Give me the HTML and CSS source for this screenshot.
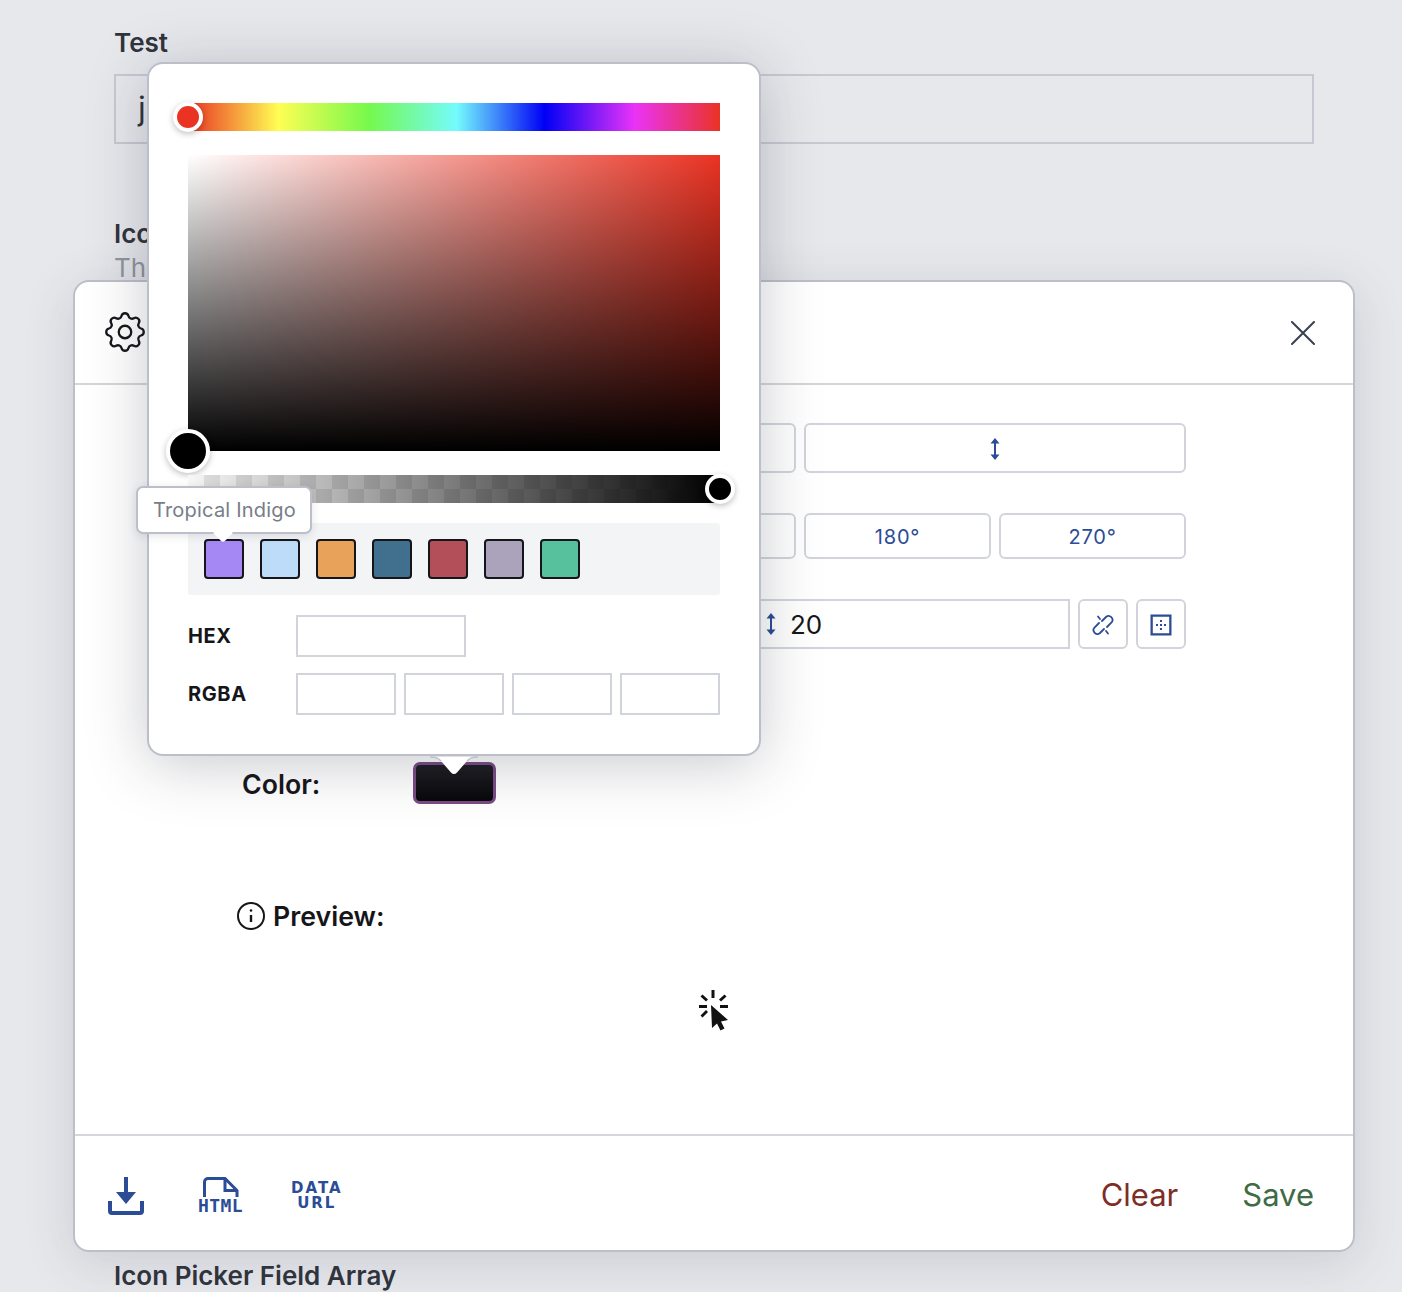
FILE: index.html
```html
<!DOCTYPE html>
<html lang="en">
<head>
    <meta charset="UTF-8">
    <meta name="viewport" content="width=device-width, initial-scale=1.0">
    <title>Icon Picker</title>
    <link rel="stylesheet" href="styles.css">
</head>
<body>
    <div class="page">
        <label class="field-label">Test</label>
        <div class="text-input">j</div>
        <label class="field-label icon-label">Icon</label>
        <p class="field-help">This</p>
        <label class="field-label array-label">Icon Picker Field Array</label>
    </div>

    <div class="modal">
        <header class="modal-head">
            <svg class="gear" viewBox="0 0 24 24" fill="none" stroke="#16161a" stroke-width="1.100" stroke-linecap="round" stroke-linejoin="round">
                <path d="M10.325 4.317c.426-1.756 2.924-1.756 3.35 0a1.724 1.724 0 0 0 2.573 1.066c1.543-.94 3.31.826 2.37 2.37a1.724 1.724 0 0 0 1.065 2.572c1.756.426 1.756 2.924 0 3.35a1.724 1.724 0 0 0-1.066 2.573c.94 1.543-.826 3.31-2.37 2.37a1.724 1.724 0 0 0-2.572 1.065c-.426 1.756-2.924 1.756-3.35 0a1.724 1.724 0 0 0-2.573-1.066c-1.543.94-3.31-.826-2.37-2.37a1.724 1.724 0 0 0-1.065-2.572c-1.756-.426-1.756-2.924 0-3.35a1.724 1.724 0 0 0 1.066-2.573c-.94-1.543.826-3.31 2.37-2.37 1 .608 2.296.07 2.572-1.065z"/>
                <circle cx="12" cy="12" r="3"/>
            </svg>
            <svg class="close" viewBox="0 0 24 24" fill="none" stroke="#374151" stroke-width="2" stroke-linecap="round">
                <path d="M1 1l22 22M23 1L1 23"/>
            </svg>
        </header>

        <div class="modal-body">
            <div class="row flip-row">
                <button class="opt"></button>
                <button class="opt">
                    <svg class="updown" viewBox="0 0 12 24" fill="#2b4c96"><path d="M5 4h2v16H5z"/><path d="M6 1l4.500 5.500h-9zM6 23l-4.500-5.500h9z"/></svg>
                </button>
            </div>
            <div class="row rotate-row">
                <button class="opt"></button>
                <button class="opt"></button>
                <button class="opt">180°</button>
                <button class="opt">270°</button>
            </div>
            <div class="row size-row">
                <div class="size-input"></div>
                <div class="size-input">
                    <svg class="updown small" viewBox="0 0 12 24" fill="#2b4c96"><path d="M5 4h2v16H5z"/><path d="M6 1l4.500 5.500h-9zM6 23l-4.500-5.500h9z"/></svg>
                    <span>20</span>
                </div>
                <button class="square">
                    <svg viewBox="0 0 24 24" fill="none" stroke="#2b4c96" stroke-width="1.800" stroke-linecap="round">
                        <path d="M11 8l4-4a3.900 3.900 0 0 1 5.500 5.500L16 14"/>
                        <path d="M13 16l-4 4a3.900 3.900 0 0 1-5.500-5.500L8 10"/>
                        <path d="M7 3.500L9 6M17 20.500L15 18"/>
                    </svg>
                </button>
                <button class="square">
                    <svg viewBox="0 0 24 24" fill="#2b4c96">
                        <path d="M1.500 1.500h21v21h-21zM3.800 3.800v16.400h16.400V3.800z" fill-rule="evenodd"/>
                        <path d="M11 7h2v2h-2zM11 11h2v2h-2zM7 11h2v2H7zM15 11h2v2h-2zM11 15h2v2h-2z"/>
                    </svg>
                </button>
            </div>

            <div class="color-row">
                <span class="row-label">Color:</span>
                <span class="color-swatch"></span>
            </div>

            <div class="preview-row">
                <svg class="info" viewBox="0 0 28 28" fill="none" stroke="#16161a" stroke-width="2">
                    <circle cx="14" cy="14" r="13"/>
                    <path d="M14 13v7" stroke-width="2.400"/>
                    <circle cx="14" cy="8.500" r="1.300" fill="#16161a" stroke="none"/>
                </svg>
                <span class="row-label">Preview:</span>
            </div>

            <div class="preview-icon">
                <svg viewBox="0 0 32 42" fill="#111">
                    <path d="M14.500 0h3v8h-3z"/>
                    <path d="M2 15h8v3H2zM23 15h8v3h-8z"/>
                    <path d="M5.500 4.500l5.500 5-2 2-5.500-5zM27.500 4.500l-5.500 5 2 2 5.500-5zM9 20l2 2-5.500 5.500-2-2z"/>
                    <path d="M14 15l17 15-7 1.500 3.500 7-4 2-3.500-7L15 38z"/>
                </svg>
            </div>
        </div>

        <footer class="modal-foot">
            <div class="export-icons">
                <svg class="download" viewBox="0 0 36 38" fill="#2b4c96">
                    <path d="M16 0h4v16h-4z"/>
                    <path d="M8 15h20L18 27z"/>
                    <path d="M0 24h4v10h28V24h4v10a4 4 0 0 1-4 4H4a4 4 0 0 1-4-4z"/>
                </svg>
                <div class="file-html">
                    <svg viewBox="0 0 36 20" fill="none" stroke="#2b4c96" stroke-width="3">
                        <path d="M1.500 20V5a3.500 3.500 0 0 1 3.500-3.500h17l12 12V20"/>
                        <path d="M22 1.500v12h12"/>
                    </svg>
                    <span>HTML</span>
                </div>
                <div class="data-url">DATA<br>URL</div>
            </div>
            <div class="foot-actions">
                <button class="clear">Clear</button>
                <button class="save">Save</button>
            </div>
        </footer>
    </div>

    <div class="picker">
        <div class="hue-bar"><span class="knob hue-knob"></span></div>
        <div class="sv-box"><span class="knob sv-knob"></span></div>
        <div class="alpha-bar"><span class="knob alpha-knob"></span></div>

        <div class="swatches">
            <span class="swatch indigo"></span>
            <span class="swatch sky"></span>
            <span class="swatch sand"></span>
            <span class="swatch steel"></span>
            <span class="swatch rose"></span>
            <span class="swatch lilac"></span>
            <span class="swatch mint"></span>
            <div class="tooltip">Tropical Indigo</div>
        </div>

        <div class="value-row hex-row">
            <span class="value-label">HEX</span>
            <span class="value-box hex-box"></span>
        </div>
        <div class="value-row">
            <span class="value-label">RGBA</span>
            <span class="value-box"></span>
            <span class="value-box"></span>
            <span class="value-box"></span>
            <span class="value-box"></span>
        </div>

        <svg class="picker-arrow" viewBox="0 0 48 20">
            <path d="M0 1C6 1 8 2 11 5L21 16.500Q24 19.500 27 16.500L37 5C40 2 42 1 48 1Z" fill="#fff"/>
            <path d="M0 1C6 1 8 2 11 5M37 5C40 2 42 1 48 1" fill="none" stroke="#bcbfc9" stroke-width="1.500"/>
        </svg>
    </div>
</body>
</html>
```

FILE: styles.css
```css
* {
    box-sizing: border-box;
}

body {
    margin: 0;
    height: 1292px;
    overflow: hidden;
    position: relative;
    background-color: #e7e8ec;
    color: #16161a;
    font-family: Inter, "Liberation Sans", sans-serif;
}

button {
    font-family: inherit;
    background: #fff;
    padding: 0;
    cursor: pointer;
}

.page {
    padding: 27px 88px 0 114px;
}

.field-label {
    display: block;
    font-size: 26px;
    line-height: 32px;
    font-weight: 600;
    color: #30343c;
}

.text-input {
    height: 70px;
    margin-top: 15px;
    padding-left: 22px;
    border: 2px solid #c6c9d1;
    font-size: 32px;
    line-height: 66px;
    color: #30343c;
}

.icon-label {
    margin-top: 74px;
}

.field-help {
    margin: 2px 0 0;
    font-size: 26px;
    line-height: 32px;
    color: #9297a1;
}

.array-label {
    margin-top: 976px;
}

/* modal */
.modal {
    position: absolute;
    left: 73px;
    top: 280px;
    width: 1282px;
    height: 972px;
    display: flex;
    flex-direction: column;
    background: #fff;
    border: 2px solid #bcbfc9;
    border-radius: 16px;
    box-shadow: 0 10px 50px rgba(60, 65, 80, 0.16);
}

.modal-head {
    height: 103px;
    flex: none;
    display: flex;
    align-items: center;
    justify-content: space-between;
    padding: 0 38px 0 25px;
    border-bottom: 2px solid #d4d6db;
}

.gear {
    width: 50px;
    height: 50px;
    margin-top: -2px;
}

.close {
    width: 24px;
    height: 24px;
}

.modal-body {
    flex: 1;
    padding: 38px 0 0 167px;
}

.row {
    display: flex;
    gap: 8px;
    width: 772px;
    margin-left: 172px;
}

.opt {
    flex: 1;
    display: flex;
    align-items: center;
    justify-content: center;
    padding-top: 1px;
    border: 2px solid #d1d5db;
    border-radius: 6px;
    font-size: 20px;
    letter-spacing: 0.8px;
    color: #2b4c96;
}

.flip-row {
    height: 50px;
}

.rotate-row {
    height: 46px;
    margin-top: 40px;
}

.size-row {
    height: 50px;
    margin-top: 40px;
}

.updown {
    width: 12px;
    height: 24px;
}

.size-input {
    flex: 1;
    display: flex;
    align-items: center;
    gap: 13px;
    padding-left: 9px;
    border: 2px solid #d1d5db;
    font-size: 26px;
    color: #16161a;
}

.size-input:first-child {
    flex: none;
    width: 332px;
}

.square {
    flex: none;
    width: 50px;
    display: flex;
    align-items: center;
    justify-content: center;
    padding-top: 2px;
    border: 2px solid #d1d5db;
    border-radius: 6px;
}

.square svg {
    width: 24px;
    height: 24px;
}

.row-label {
    font-size: 26.700px;
    line-height: 32px;
    font-weight: 600;
    color: #16161a;
}

.color-row {
    display: flex;
    align-items: center;
    height: 42px;
    margin-top: 113px;
}

.color-row .row-label {
    width: 171px;
    padding-top: 1px;
}

.color-swatch {
    width: 83px;
    height: 42px;
    border: 3px solid #7a4a86;
    border-radius: 7px;
    background: linear-gradient(#1d1d22, #08080a);
}

.preview-row {
    display: flex;
    align-items: center;
    gap: 8px;
    margin: 96px 0 0 -5px;
}

.info {
    width: 28px;
    height: 28px;
}

.preview-icon {
    display: flex;
    justify-content: center;
    margin: 58px 0 0 -170px;
}

.preview-icon svg {
    width: 32px;
    height: 42px;
}

.modal-foot {
    height: 116px;
    flex: none;
    display: flex;
    align-items: center;
    justify-content: space-between;
    padding: 6px 39px 0 33px;
    border-top: 2px solid #d4d6db;
}

.export-icons {
    display: flex;
    align-items: center;
    gap: 54px;
}

.download {
    width: 36px;
    height: 38px;
}

.file-html {
    width: 45px;
    display: flex;
    flex-direction: column;
    align-items: center;
}

.file-html svg {
    width: 36px;
    height: 20px;
}

.file-html span {
    font-family: "DejaVu Sans Mono", monospace;
    font-weight: 700;
    font-size: 18px;
    line-height: 18px;
    letter-spacing: 0.4px;
    color: #2b4c96;
}

.data-url {
    margin-left: -6px;
    font-family: "DejaVu Sans", sans-serif;
    font-weight: 700;
    font-size: 15px;
    line-height: 15px;
    letter-spacing: 2px;
    text-align: center;
    color: #2b4c96;
}

.foot-actions {
    display: flex;
    gap: 64px;
    margin-top: -2px;
}

.foot-actions button {
    border: none;
    font-size: 31px;
    line-height: 40px;
}

.clear {
    color: #7d2e26;
}

.save {
    color: #3f6b45;
}

/* colour picker popover */
.picker {
    position: absolute;
    left: 147px;
    top: 62px;
    width: 614px;
    height: 694px;
    padding: 39px 39px 0 40px;
    background: #fff;
    border: 2px solid #bcbfc9;
    border-radius: 16px;
    box-shadow: 0 8px 60px rgba(40, 44, 60, 0.25);
}

.hue-bar {
    position: relative;
    height: 28px;
    margin-left: -1px;
    background: linear-gradient(to right, #ea3323 0%, #fffe54 17%, #75f94c 34%, #74fbfd 50.500%, #0000f5 67%, #ea33f7 84%, #ea3323 100%);
}

.sv-box {
    position: relative;
    height: 296px;
    margin: 24px 0 0 -1px;
    background: linear-gradient(to top, #000, transparent), linear-gradient(to right, #fff, #ea3323);
}

.alpha-bar {
    position: relative;
    height: 28px;
    margin: 24px 0 0 -1px;
    background:
        linear-gradient(to right, transparent, #000),
        repeating-conic-gradient(#e2e2e2 0% 25%, #f7f7f7 0% 50%) 0 0 / 32px 28px;
}

.knob {
    position: absolute;
    width: 30px;
    height: 30px;
    border-radius: 50%;
    border: 4px solid #fff;
    box-shadow: 0 2px 6px rgba(0, 0, 0, 0.25);
}

.hue-knob {
    left: -15px;
    top: -1px;
    background: #ea3323;
}

.sv-knob {
    left: -22px;
    bottom: -22px;
    width: 44px;
    height: 44px;
    background: #000;
}

.alpha-knob {
    right: -15px;
    top: -1px;
    background: #000;
}

.swatches {
    position: relative;
    display: flex;
    gap: 16px;
    height: 72px;
    margin: 20px 0 0 -1px;
    padding: 16px;
    border-radius: 3px;
    background: #f3f4f6;
}

.swatch {
    width: 40px;
    height: 40px;
    border: 2px solid #16161a;
    border-radius: 4px;
}

.indigo { background: #a688f5; }
.sky { background: #bcdcf9; }
.sand { background: #e8a259; }
.steel { background: #41708f; }
.rose { background: #b34f58; }
.lilac { background: #aaa3bb; }
.mint { background: #57c19e; }

.tooltip {
    position: absolute;
    left: -52px;
    top: -37px;
    width: 176px;
    height: 48px;
    padding-left: 15px;
    background: #fff;
    border: 2px solid #bcbfc9;
    border-radius: 7px;
    font-size: 20px;
    line-height: 44px;
    letter-spacing: 0.2px;
    color: #787d88;
    box-shadow: 0 2px 10px rgba(40, 44, 60, 0.12);
}

.tooltip::after {
    content: "";
    position: absolute;
    left: 78px;
    bottom: -8px;
    width: 14px;
    height: 14px;
    background: #fff;
    transform: rotate(45deg);
    border-bottom-right-radius: 3px;
}

.value-row {
    display: flex;
    gap: 8px;
    height: 42px;
    margin: 16px 0 0 -1px;
}

.hex-row {
    margin-top: 20px;
}

.value-label {
    width: 100px;
    font-size: 20px;
    line-height: 42px;
    font-weight: 700;
    letter-spacing: 0.6px;
    color: #16161a;
}

.value-box {
    width: 100px;
    border: 2px solid #d1d5db;
}

.hex-box {
    width: 170px;
}

.picker-arrow {
    position: absolute;
    left: 281px;
    bottom: -22px;
    width: 48px;
    height: 20px;
}
```
